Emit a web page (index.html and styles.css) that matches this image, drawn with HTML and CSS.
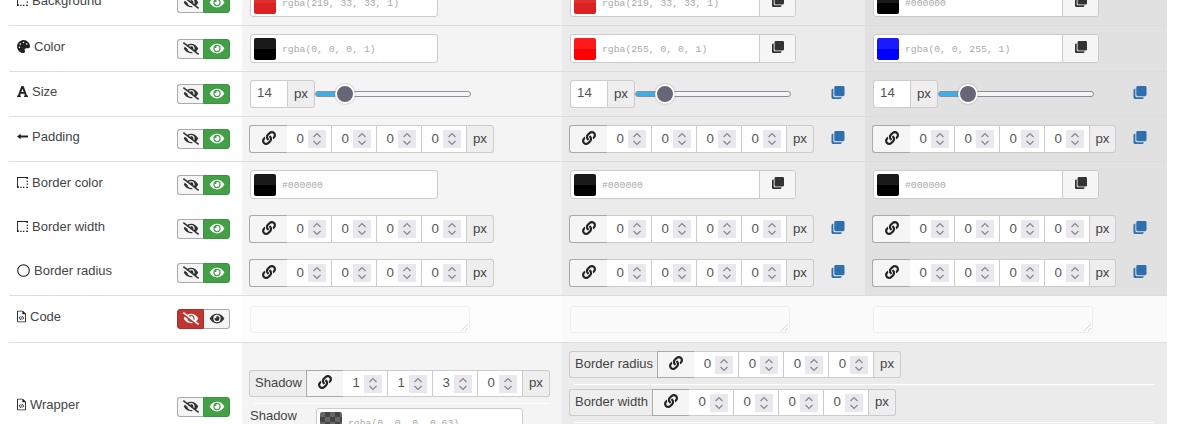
FILE: index.html
```html
<!DOCTYPE html>
<html lang="en">
    <head>
        <meta charset="UTF-8" />
        <meta name="viewport" content="width=device-width, initial-scale=1.0" />
        <title>Style editor</title>
        <link rel="stylesheet" href="styles.css">
    </head>
    <body>
        <svg class="sprite" xmlns="http://www.w3.org/2000/svg">
            <symbol id="i-eye" viewBox="0 0 576 512"><path d="M572.52 241.4C518.29 135.59 410.93 64 288 64S57.68 135.64 3.48 241.41a32.35 32.35 0 0 0 0 29.19C57.71 376.41 165.07 448 288 448s230.32-71.64 284.52-177.41a32.35 32.35 0 0 0 0-29.19zM288 400a144 144 0 1 1 144-144 143.93 143.93 0 0 1-144 144zm0-240a95.31 95.31 0 0 0-25.31 3.79 47.85 47.85 0 0 1-66.9 66.9A95.78 95.78 0 1 0 288 160z"/></symbol>
            <symbol id="i-eye-slash" viewBox="0 0 640 512"><path d="M320 400c-75.85 0-137.25-58.71-142.9-133.11L72.2 185.82c-13.79 17.3-26.48 35.59-36.72 55.59a32.35 32.35 0 0 0 0 29.19C89.71 376.41 197.07 448 320 448c26.91 0 52.87-4 77.89-10.46L346 397.39a144.13 144.13 0 0 1-26 2.61zm313.82 58.1l-110.55-85.44a331.25 331.25 0 0 0 81.25-102.07 32.35 32.35 0 0 0 0-29.19C550.29 135.59 442.93 64 320 64a308.15 308.15 0 0 0-147.32 37.7L45.46 3.37A16 16 0 0 0 23 6.18L3.37 31.45A16 16 0 0 0 6.18 53.9l588.36 454.73a16 16 0 0 0 22.46-2.81l19.64-25.27a16 16 0 0 0-2.82-22.45zm-183.72-142l-39.3-30.38A94.75 94.75 0 0 0 416 256a94.76 94.76 0 0 0-121.31-92.21A47.65 47.65 0 0 1 304 192a46.64 46.64 0 0 1-1.54 10l-73.61-56.89A142.31 142.31 0 0 1 320 112a143.92 143.92 0 0 1 144 144c0 21.63-5.29 41.79-13.9 60.11z"/></symbol>
            <symbol id="i-link" viewBox="0 0 512 512"><path d="M326.612 185.391c59.747 59.809 58.927 155.698.36 214.59-.11.12-.24.25-.36.37l-67.2 67.2c-59.27 59.27-155.699 59.262-214.96 0-59.27-59.26-59.27-155.7 0-214.96l37.106-37.106c9.84-9.84 26.786-3.3 27.294 10.606.648 17.722 3.826 35.527 9.69 52.721 1.986 5.822.567 12.262-3.783 16.612l-13.087 13.087c-28.026 28.026-28.905 73.66-1.155 101.96 28.024 28.579 74.086 28.749 102.325.51l67.2-67.19c28.191-28.191 28.073-73.757 0-101.83-3.701-3.694-7.429-6.564-10.341-8.569a16.037 16.037 0 0 1-6.947-12.606c-.396-10.567 3.348-21.456 11.698-29.806l21.054-21.055c5.521-5.521 14.182-6.199 20.584-1.731a152.482 152.482 0 0 1 20.522 17.197zM467.547 44.449c-59.261-59.262-155.69-59.27-214.96 0l-67.2 67.2c-.12.12-.25.25-.36.37-58.566 58.892-59.387 154.781.36 214.59a152.454 152.454 0 0 0 20.521 17.196c6.402 4.468 15.064 3.789 20.584-1.731l21.054-21.055c8.35-8.35 12.094-19.239 11.698-29.806a16.037 16.037 0 0 0-6.947-12.606c-2.912-2.005-6.64-4.875-10.341-8.569-28.073-28.073-28.191-73.639 0-101.83l67.2-67.19c28.239-28.239 74.3-28.069 102.325.51 27.75 28.3 26.872 73.934-1.155 101.96l-13.087 13.087c-4.35 4.35-5.769 10.79-3.783 16.612 5.864 17.194 9.042 34.999 9.69 52.721.509 13.906 17.454 20.446 27.294 10.606l37.106-37.106c59.271-59.259 59.271-155.699.001-214.959z"/></symbol>
            <symbol id="i-copy" viewBox="0 0 14 14"><path d="M4.5 0h8A1.5 1.5 0 0 1 14 1.5v8a1.5 1.5 0 0 1-1.5 1.5h-8A1.5 1.5 0 0 1 3 9.500v-8A1.500 1.500 0 0 1 4.500 0z"/><path d="M0 4.500A1.500 1.500 0 0 1 1.500 3H2v7.500A1.500 1.500 0 0 0 3.500 12H11v.500A1.500 1.500 0 0 1 9.500 14h-8A1.500 1.500 0 0 1 0 12.500z"/></symbol>
            <symbol id="i-palette" viewBox="0 0 512 512"><path d="M204.3 5C104.9 24.4 24.8 104.3 5.200 203.400c-37 187 131.700 326.400 258.800 306.700 41.200-6.400 61.400-54.600 42.500-91.700-23.100-45.400 9.900-98.400 60.900-98.400h79.700c35.800 0 64.800-29.600 64.900-65.300C511.500 97.100 368.100-26.900 204.300 5zM96 320c-17.700 0-32-14.300-32-32s14.300-32 32-32 32 14.300 32 32-14.300 32-32 32zm32-128c-17.700 0-32-14.300-32-32s14.300-32 32-32 32 14.300 32 32-14.300 32-32 32zm128-64c-17.700 0-32-14.300-32-32s14.300-32 32-32 32 14.300 32 32-14.300 32-32 32zm128 64c-17.700 0-32-14.300-32-32s14.300-32 32-32 32 14.300 32 32-14.300 32-32 32z"/></symbol>
            <symbol id="i-font" viewBox="0 0 448 512"><path d="M432 416h-23.410L277.880 53.690A32 32 0 0 0 247.580 32h-47.160a32 32 0 0 0-30.300 21.690L39.410 416H16a16 16 0 0 0-16 16v32a16 16 0 0 0 16 16h128a16 16 0 0 0 16-16v-32a16 16 0 0 0-16-16h-19.580l23.300-64h152.560l23.300 64H304a16 16 0 0 0-16 16v32a16 16 0 0 0 16 16h128a16 16 0 0 0 16-16v-32a16 16 0 0 0-16-16zM176.850 272L224 142.510 271.150 272z"/></symbol>
            <symbol id="i-arrow" viewBox="0 0 12 12"><path d="M0 6l4-3v2h8v2H4v2z"/></symbol>
            <symbol id="i-border" viewBox="0 0 12 12"><path d="M0 0h12v2H10V1H1v9h1v2H0z"/><path d="M3.500 10.500h1.500V12H3.500zM6.500 10.500H8V12H6.500zM10 10.500h2V12h-2zM10.500 4H12v1.500h-1.500zM10.500 7H12v1.500h-1.500z"/></symbol>
            <symbol id="i-circle" viewBox="0 0 13 13"><circle cx="6.500" cy="6.500" r="5.800" fill="none" stroke="currentColor" stroke-width="1.100"/></symbol>
            <symbol id="i-file" viewBox="0 0 10 13"><path d="M1 0h5.500L10 3.500V12a1 1 0 0 1-1 1H1a1 1 0 0 1-1-1V1a1 1 0 0 1 1-1zm0 1v11h8V4H6V1z"/><path d="M3.800 6.200l.6.500L3 8.200l1.400 1.400-.6.500-1.900-1.900zM6.200 6.200l1.900 2-1.900 1.900-.6-.5L7 8.200 5.600 6.700zM5.500 5.800l.6.200-1.600 4.500-.6-.2z"/></symbol>
        </svg>

        <div class="editor">
            <!-- Background -->
            <div class="row">
                <div class="cell-label">
                    <div class="prop-name"><svg class="icon w-border"><use href="#i-border"/></svg>Background</div>
                    <div class="toggle">
                        <a href="#" class="toggle-btn"><svg class="eye"><use href="#i-eye-slash"/></svg></a>
                        <a href="#" class="toggle-btn on"><svg class="eye"><use href="#i-eye"/></svg></a>
                    </div>
                </div>
                <div class="cell col-a">
                    <div class="color-field plain"><span class="swatch s-crimson"></span><span class="color-text">rgba(219, 33, 33, 1)</span></div>
                </div>
                <div class="cell col-b">
                    <div class="color-field"><span class="swatch s-crimson"></span><span class="color-text">rgba(219, 33, 33, 1)</span><a href="#" class="paste-btn"><svg class="icon-copy"><use href="#i-copy"/></svg></a></div>
                </div>
                <div class="cell col-c">
                    <div class="color-field"><span class="swatch s-black"></span><span class="color-text">#000000</span><a href="#" class="paste-btn"><svg class="icon-copy"><use href="#i-copy"/></svg></a></div>
                </div>
            </div>

            <!-- Color -->
            <div class="row">
                <div class="cell-label">
                    <div class="prop-name"><svg class="icon w-palette"><use href="#i-palette"/></svg>Color</div>
                    <div class="toggle">
                        <a href="#" class="toggle-btn"><svg class="eye"><use href="#i-eye-slash"/></svg></a>
                        <a href="#" class="toggle-btn on"><svg class="eye"><use href="#i-eye"/></svg></a>
                    </div>
                </div>
                <div class="cell col-a">
                    <div class="color-field plain"><span class="swatch s-black"></span><span class="color-text">rgba(0, 0, 0, 1)</span></div>
                </div>
                <div class="cell col-b">
                    <div class="color-field"><span class="swatch s-red"></span><span class="color-text">rgba(255, 0, 0, 1)</span><a href="#" class="paste-btn"><svg class="icon-copy"><use href="#i-copy"/></svg></a></div>
                </div>
                <div class="cell col-c">
                    <div class="color-field"><span class="swatch s-blue"></span><span class="color-text">rgba(0, 0, 255, 1)</span><a href="#" class="paste-btn"><svg class="icon-copy"><use href="#i-copy"/></svg></a></div>
                </div>
            </div>

            <!-- Size -->
            <div class="row">
                <div class="cell-label">
                    <div class="prop-name"><svg class="icon w-font"><use href="#i-font"/></svg>Size</div>
                    <div class="toggle">
                        <a href="#" class="toggle-btn"><svg class="eye"><use href="#i-eye-slash"/></svg></a>
                        <a href="#" class="toggle-btn on"><svg class="eye"><use href="#i-eye"/></svg></a>
                    </div>
                </div>
                <div class="cell col-a">
                    <div class="size-field"><input class="size-input" type="text" value="14" /><span class="addon">px</span><input class="slider" type="range" min="0" max="100" value="14" /></div>
                </div>
                <div class="cell col-b">
                    <div class="size-field"><input class="size-input" type="text" value="14" /><span class="addon">px</span><input class="slider" type="range" min="0" max="100" value="14" /><a href="#" class="copy-link far"><svg class="icon-copy"><use href="#i-copy"/></svg></a></div>
                </div>
                <div class="cell col-c">
                    <div class="size-field"><input class="size-input" type="text" value="14" /><span class="addon">px</span><input class="slider" type="range" min="0" max="100" value="14" /><a href="#" class="copy-link far"><svg class="icon-copy"><use href="#i-copy"/></svg></a></div>
                </div>
            </div>

            <!-- Padding -->
            <div class="row">
                <div class="cell-label">
                    <div class="prop-name"><svg class="icon w-border"><use href="#i-arrow"/></svg>Padding</div>
                    <div class="toggle">
                        <a href="#" class="toggle-btn"><svg class="eye"><use href="#i-eye-slash"/></svg></a>
                        <a href="#" class="toggle-btn on"><svg class="eye"><use href="#i-eye"/></svg></a>
                    </div>
                </div>
                <div class="cell col-a">
                    <div class="quad"><a href="#" class="link-btn"><svg class="icon-link"><use href="#i-link"/></svg></a><input type="number" value="0" /><input type="number" value="0" /><input type="number" value="0" /><input type="number" value="0" /><span class="addon">px</span></div>
                </div>
                <div class="cell col-b">
                    <div class="quad"><a href="#" class="link-btn"><svg class="icon-link"><use href="#i-link"/></svg></a><input type="number" value="0" /><input type="number" value="0" /><input type="number" value="0" /><input type="number" value="0" /><span class="addon">px</span></div>
                    <a href="#" class="copy-link"><svg class="icon-copy"><use href="#i-copy"/></svg></a>
                </div>
                <div class="cell col-c">
                    <div class="quad"><a href="#" class="link-btn"><svg class="icon-link"><use href="#i-link"/></svg></a><input type="number" value="0" /><input type="number" value="0" /><input type="number" value="0" /><input type="number" value="0" /><span class="addon">px</span></div>
                    <a href="#" class="copy-link"><svg class="icon-copy"><use href="#i-copy"/></svg></a>
                </div>
            </div>

            <!-- Border color -->
            <div class="row no-line">
                <div class="cell-label">
                    <div class="prop-name"><svg class="icon w-border"><use href="#i-border"/></svg>Border color</div>
                    <div class="toggle">
                        <a href="#" class="toggle-btn"><svg class="eye"><use href="#i-eye-slash"/></svg></a>
                        <a href="#" class="toggle-btn on"><svg class="eye"><use href="#i-eye"/></svg></a>
                    </div>
                </div>
                <div class="cell col-a">
                    <div class="color-field plain"><span class="swatch s-black"></span><span class="color-text">#000000</span></div>
                </div>
                <div class="cell col-b">
                    <div class="color-field"><span class="swatch s-black"></span><span class="color-text">#000000</span><a href="#" class="paste-btn"><svg class="icon-copy"><use href="#i-copy"/></svg></a></div>
                </div>
                <div class="cell col-c">
                    <div class="color-field"><span class="swatch s-black"></span><span class="color-text">#000000</span><a href="#" class="paste-btn"><svg class="icon-copy"><use href="#i-copy"/></svg></a></div>
                </div>
            </div>

            <!-- Border width -->
            <div class="row no-line">
                <div class="cell-label">
                    <div class="prop-name"><svg class="icon w-border"><use href="#i-border"/></svg>Border width</div>
                    <div class="toggle">
                        <a href="#" class="toggle-btn"><svg class="eye"><use href="#i-eye-slash"/></svg></a>
                        <a href="#" class="toggle-btn on"><svg class="eye"><use href="#i-eye"/></svg></a>
                    </div>
                </div>
                <div class="cell col-a">
                    <div class="quad"><a href="#" class="link-btn"><svg class="icon-link"><use href="#i-link"/></svg></a><input type="number" value="0" /><input type="number" value="0" /><input type="number" value="0" /><input type="number" value="0" /><span class="addon">px</span></div>
                </div>
                <div class="cell col-b">
                    <div class="quad"><a href="#" class="link-btn"><svg class="icon-link"><use href="#i-link"/></svg></a><input type="number" value="0" /><input type="number" value="0" /><input type="number" value="0" /><input type="number" value="0" /><span class="addon">px</span></div>
                    <a href="#" class="copy-link"><svg class="icon-copy"><use href="#i-copy"/></svg></a>
                </div>
                <div class="cell col-c">
                    <div class="quad"><a href="#" class="link-btn"><svg class="icon-link"><use href="#i-link"/></svg></a><input type="number" value="0" /><input type="number" value="0" /><input type="number" value="0" /><input type="number" value="0" /><span class="addon">px</span></div>
                    <a href="#" class="copy-link"><svg class="icon-copy"><use href="#i-copy"/></svg></a>
                </div>
            </div>

            <!-- Border radius -->
            <div class="row">
                <div class="cell-label">
                    <div class="prop-name"><svg class="icon w-palette"><use href="#i-circle"/></svg>Border radius</div>
                    <div class="toggle">
                        <a href="#" class="toggle-btn"><svg class="eye"><use href="#i-eye-slash"/></svg></a>
                        <a href="#" class="toggle-btn on"><svg class="eye"><use href="#i-eye"/></svg></a>
                    </div>
                </div>
                <div class="cell col-a">
                    <div class="quad"><a href="#" class="link-btn"><svg class="icon-link"><use href="#i-link"/></svg></a><input type="number" value="0" /><input type="number" value="0" /><input type="number" value="0" /><input type="number" value="0" /><span class="addon">px</span></div>
                </div>
                <div class="cell col-b">
                    <div class="quad"><a href="#" class="link-btn"><svg class="icon-link"><use href="#i-link"/></svg></a><input type="number" value="0" /><input type="number" value="0" /><input type="number" value="0" /><input type="number" value="0" /><span class="addon">px</span></div>
                    <a href="#" class="copy-link"><svg class="icon-copy"><use href="#i-copy"/></svg></a>
                </div>
                <div class="cell col-c">
                    <div class="quad"><a href="#" class="link-btn"><svg class="icon-link"><use href="#i-link"/></svg></a><input type="number" value="0" /><input type="number" value="0" /><input type="number" value="0" /><input type="number" value="0" /><span class="addon">px</span></div>
                    <a href="#" class="copy-link"><svg class="icon-copy"><use href="#i-copy"/></svg></a>
                </div>
            </div>

            <!-- Code -->
            <div class="row code-row">
                <div class="cell-label">
                    <div class="prop-name"><svg class="icon w-file"><use href="#i-file"/></svg>Code</div>
                    <div class="toggle">
                        <a href="#" class="toggle-btn off"><svg class="eye"><use href="#i-eye-slash"/></svg></a>
                        <a href="#" class="toggle-btn"><svg class="eye"><use href="#i-eye"/></svg></a>
                    </div>
                </div>
                <div class="cell col-a"><textarea class="code-input"></textarea></div>
                <div class="cell col-b"><textarea class="code-input"></textarea></div>
                <div class="cell col-c"><textarea class="code-input"></textarea></div>
            </div>

            <!-- Wrapper -->
            <div class="row wrapper-row">
                <div class="cell-label">
                    <div class="prop-name"><svg class="icon w-file"><use href="#i-file"/></svg>Wrapper</div>
                    <div class="toggle">
                        <a href="#" class="toggle-btn"><svg class="eye"><use href="#i-eye-slash"/></svg></a>
                        <a href="#" class="toggle-btn on"><svg class="eye"><use href="#i-eye"/></svg></a>
                    </div>
                </div>
                <div class="cell col-a wrapper-main">
                    <div class="quad"><span class="addon quad-name">Shadow</span><a href="#" class="link-btn boxed"><svg class="icon-link"><use href="#i-link"/></svg></a><input type="number" value="1" /><input type="number" value="1" /><input type="number" value="3" /><input type="number" value="0" /><span class="addon">px</span></div>
                    <hr class="line" />
                    <div class="shadow-color">
                        <span class="shadow-label">Shadow color</span>
                        <div class="color-field plain narrow"><span class="swatch s-check"></span><span class="color-text">rgba(0, 0, 0, 0.63)</span></div>
                    </div>
                </div>
                <div class="cell col-b wrapper-side">
                    <div class="quad"><span class="addon quad-name">Border radius</span><a href="#" class="link-btn boxed"><svg class="icon-link"><use href="#i-link"/></svg></a><input type="number" value="0" /><input type="number" value="0" /><input type="number" value="0" /><input type="number" value="0" /><span class="addon">px</span></div>
                    <hr class="line" />
                    <div class="quad"><span class="addon quad-name">Border width</span><a href="#" class="link-btn boxed"><svg class="icon-link"><use href="#i-link"/></svg></a><input type="number" value="0" /><input type="number" value="0" /><input type="number" value="0" /><input type="number" value="0" /><span class="addon">px</span></div>
                    <hr class="line" />
                </div>
            </div>
        </div>
    </body>
</html>
```

FILE: styles.css
```css
* {
    margin: 0;
    padding: 0;
    box-sizing: border-box;
}

html,
body {
    height: 100vh;
    overflow: hidden;
    background-color: white;
}

body {
    font-family: "Liberation Sans", Arial, sans-serif;
    font-size: 13px;
    color: #444;
}

a {
    color: inherit;
    text-decoration: none;
}

.sprite {
    display: none;
}

/* the page is scrolled a little, the first row is cut off at the top */
.editor {
    width: 1158px;
    margin-top: -20px;
    margin-left: 9px;
}

.row {
    display: grid;
    grid-template-columns: 233px 320px 303px 302px;
    border-bottom: 1px solid #ddd;
}

.row.no-line {
    border-bottom: 0;
}

.cell-label {
    display: flex;
    justify-content: space-between;
    align-items: center;
    padding: 0 12px 0 8px;
}

.prop-name {
    display: flex;
    align-items: center;
    gap: 4px;
    margin-bottom: 5px;
}

.icon {
    height: 13px;
    fill: currentColor;
    color: #222;
}

.w-border {
    width: 11px;
}

.w-palette {
    width: 13px;
}

.w-font {
    width: 11px;
}

.w-file {
    width: 9px;
}

.cell {
    display: flex;
    align-items: center;
    padding: 8px 7px;
}

.col-a {
    background-color: #f4f4f4;
}

.col-b {
    background-color: #ebebeb;
}

.col-c {
    background-color: #e1e1e1;
}

/* visibility toggle */
.toggle {
    display: flex;
    width: 53px;
    height: 20px;
}

.toggle-btn {
    flex: 1;
    display: flex;
    justify-content: center;
    padding-top: 2px;
    background-color: #f5f5f5;
    border: 1px solid #aaa;
    color: #333;
}

.toggle-btn:first-child {
    border-right: 0;
    border-radius: 3px 0 0 3px;
}

.toggle-btn:last-child {
    border-left: 0;
    border-radius: 0 3px 3px 0;
}

.toggle-btn.on {
    background-color: #43a047;
    border: 1px solid #3d9142;
    color: white;
}

.toggle-btn.off {
    background-color: #bf3630;
    border: 1px solid #a82f2a;
    color: white;
}

.eye {
    width: 16px;
    height: 13px;
    fill: currentColor;
}

/* color picker field */
.color-field {
    display: flex;
    align-items: center;
    width: 226px;
    height: 29px;
    margin-left: 1px;
    background-color: white;
    border: 1px solid #ccc;
    border-radius: 3px;
}

.color-field.plain {
    width: 188px;
}

.color-field.narrow {
    width: 207px;
}

.swatch {
    flex-shrink: 0;
    width: 22px;
    height: 22px;
    margin-left: 3px;
    border-radius: 2px;
}

.s-black {
    background: linear-gradient(#1a1a1a 50%, #000 50%);
}

.s-red {
    background: linear-gradient(#ff1a1a 50%, #f00 50%);
}

.s-blue {
    background: linear-gradient(#1a1aff 50%, #00f 50%);
}

.s-crimson {
    background: linear-gradient(#df3030 50%, #db2121 50%);
}

.s-check {
    background: repeating-conic-gradient(#444 0 25%, #666 0 50%) 0 0 / 10px 10px;
}

.color-text {
    flex: 1;
    margin-left: 6px;
    padding-top: 1px;
    font-family: "Liberation Mono", monospace;
    font-size: 9.75px;
    color: #aaa;
}

.paste-btn {
    display: flex;
    justify-content: center;
    align-items: center;
    align-self: stretch;
    width: 36px;
    background-color: #f5f5f5;
    border-left: 1px solid #ccc;
    border-radius: 0 3px 3px 0;
}

.icon-copy {
    display: block;
    width: 12px;
    height: 12px;
    margin-bottom: 3px;
    fill: #333;
}

.copy-link {
    margin-left: 17px;
}

.copy-link.far {
    margin-left: 40px;
}

.col-c .copy-link.far {
    margin-left: 39px;
}

.copy-link .icon-copy {
    width: 14px;
    height: 13px;
    fill: #2f6fad;
}

/* size input and slider */
.size-field {
    display: flex;
    align-items: center;
    height: 28px;
    margin-left: 1px;
}

.size-input {
    width: 37px;
    height: 28px;
    padding: 0 0 3px 6px;
    font-family: inherit;
    font-size: 13.3px;
    color: #555;
    background-color: white;
    border: 1px solid #ccc;
    border-right: 0;
    border-radius: 3px 0 0 3px;
    outline: none;
}

.addon {
    display: flex;
    align-items: center;
    justify-content: center;
    width: 28px;
    height: 100%;
    padding-bottom: 2px;
    font-size: 13.3px;
    background-color: #eee;
    border: 1px solid #ccc;
    border-radius: 0 3px 3px 0;
    color: #444;
}

.slider {
    -webkit-appearance: none;
    width: 156px;
    height: 18px;
    background: transparent;
    outline: none;
}

.slider::-webkit-slider-runnable-track {
    height: 6px;
    background: linear-gradient(to right, #3bafe6 29px, #f5f5f5 29px);
    border: 1px solid #8d8da0;
    border-radius: 3px;
}

.slider::-webkit-slider-thumb {
    -webkit-appearance: none;
    width: 20px;
    height: 20px;
    margin-top: -8px;
    background-color: #666677;
    border: 2px solid white;
    border-radius: 50%;
    box-shadow: 0 0 2px rgba(0, 0, 0, 0.3);
}

/* four numbers with a link button */
.quad {
    display: flex;
    height: 28px;
}

.quad input {
    width: 45px;
    height: 100%;
    padding: 3px 5px 5px 4px;
    font-family: inherit;
    font-size: 13.3px;
    color: #555;
    text-align: right;
    background-color: white;
    border: 1px solid #ccc;
    border-left: 0;
    outline: none;
}

.quad input::-webkit-inner-spin-button {
    -webkit-appearance: none;
    width: 18px;
    height: 18px;
    margin-left: 4px;
    opacity: 1;
    transform: translateY(1px);
    background: #e8e8ee url("data:image/svg+xml,%3Csvg xmlns='http://www.w3.org/2000/svg' width='18' height='18'%3E%3Cpath d='M5.500 7L9 3.500 12.500 7M5.500 11L9 14.500 12.500 11' fill='none' stroke='%23888' stroke-width='1.200'/%3E%3C/svg%3E") no-repeat center;
}

.quad .addon {
    width: 27px;
    border-left: 0;
}

.col-c .quad .addon {
    width: 26px;
}

.quad .quad-name {
    width: auto;
    padding: 0 4px 2px 5px;
    font-size: 13px;
    background-color: #eee;
    border-right: 0;
    border-left: 1px solid #ccc;
    border-radius: 3px 0 0 3px;
    white-space: nowrap;
}

.link-btn {
    display: flex;
    justify-content: center;
    align-items: center;
    width: 38px;
    background-color: #f5f5f5;
    border: 1px solid #aaa;
    border-right: 0;
    border-radius: 3px 0 0 3px;
}

.link-btn.boxed {
    width: 37px;
    border-radius: 0;
}

.icon-link {
    width: 14px;
    height: 14px;
    margin-bottom: 3px;
    fill: #222;
}

/* code textareas, faded because the property is hidden */
.code-row .cell {
    padding: 10px 7px 9px;
}

.code-row .col-a {
    background-color: #fdfdfd;
}

.code-row .col-b,
.code-row .col-c {
    background-color: #fafafa;
}

.code-input {
    display: block;
    width: 220px;
    height: 27px;
    margin-left: 1px;
    background-color: white;
    border: 1px solid #ccc;
    border-radius: 3px;
    outline: none;
    opacity: 0.25;
}

/* wrapper row, it runs past the bottom of the window */
.wrapper-row {
    min-height: 128px;
}

.wrapper-row .quad {
    height: 27px;
}

.wrapper-main {
    display: block;
    padding-top: 27px;
}

.wrapper-side {
    display: block;
    grid-column: span 2;
}

.line {
    height: 1px;
    margin: 6px 6px 4px 5px;
    background-color: white;
    border: 0;
}

.shadow-color {
    display: flex;
    margin-left: 1px;
}

.shadow-label {
    width: 66px;
    line-height: 16px;
    color: #444;
}

.shadow-color .color-field {
    margin-left: 0;
}
```
